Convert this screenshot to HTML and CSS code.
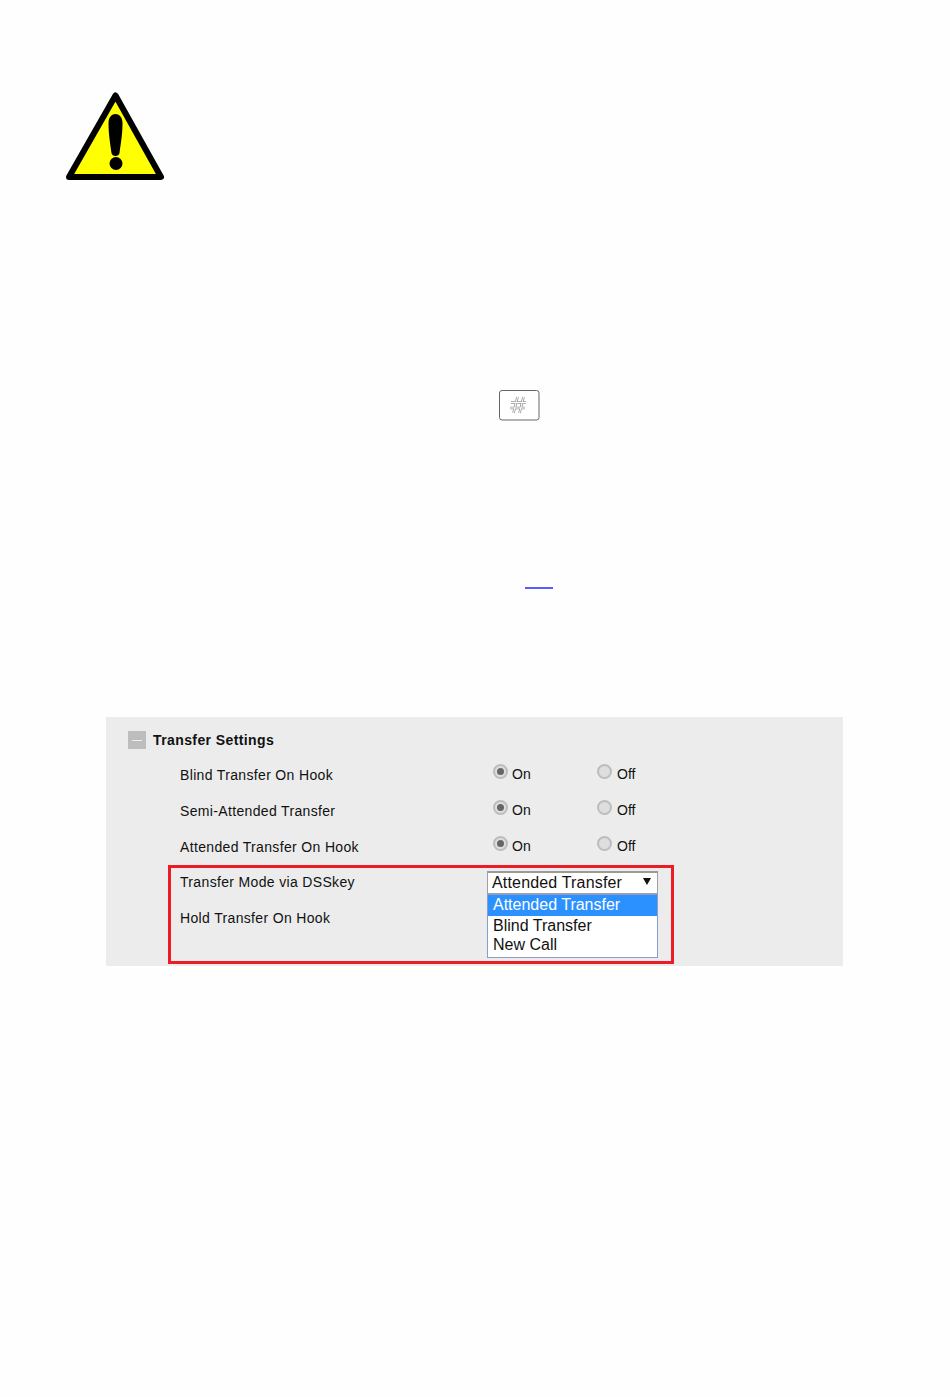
FILE: index.html
```html
<!DOCTYPE html>
<html>
<head>
<meta charset="utf-8">
<title>Transfer Settings</title>
<link rel="stylesheet" href="styles.css">
</head>
<body>

<svg class="warn" width="102" height="90" viewBox="0 0 102 90">
    <path d="M51.500 4.500 L97 86 L5 86 Z" fill="#ffff00" stroke="#000" stroke-width="6" stroke-linejoin="round"/>
    <path d="M44.500 32 C44.500 20 58.500 20 58.500 32 C58.500 44 56.500 54 55.500 62 C55 66 48 66 47.500 62 C46.500 54 44.500 44 44.500 32 Z" fill="#000"/>
    <circle cx="52" cy="72.500" r="6.500" fill="#000"/>
</svg>

<svg class="key" width="41" height="31" viewBox="0 0 41 31">
    <rect x="0.5" y="0.5" width="39.500" height="29.500" rx="2.500" fill="#fff" stroke="#666"/>
    <path d="M18.500 7 L14.500 23 M24.500 7 L20.500 23 M12 12.500 H27 M11 18 H26" fill="none" stroke="#999" stroke-width="2.600"/>
    <path d="M18.500 7 L14.500 23 M24.500 7 L20.500 23 M12 12.500 H27 M11 18 H26" fill="none" stroke="#fff" stroke-width="1"/>
</svg>

<div class="link-line"><a class="blank-link"></a></div>

<div class="panel">
    <div class="panel-title"><span class="collapse"><i></i></span>Transfer Settings</div>
    <div class="row">
        <span class="label">Blind Transfer On Hook</span>
        <span class="opt opt-on"><span class="radio radio-on"></span>On</span>
        <span class="opt"><span class="radio"></span>Off</span>
    </div>
    <div class="row">
        <span class="label">Semi-Attended Transfer</span>
        <span class="opt opt-on"><span class="radio radio-on"></span>On</span>
        <span class="opt"><span class="radio"></span>Off</span>
    </div>
    <div class="row">
        <span class="label">Attended Transfer On Hook</span>
        <span class="opt opt-on"><span class="radio radio-on"></span>On</span>
        <span class="opt"><span class="radio"></span>Off</span>
    </div>
    <div class="row row-mode">
        <span class="label">Transfer Mode via DSSkey</span>
        <div class="select">
            <div class="select-box">Attended Transfer<span class="arrow"></span></div>
            <ul class="select-list">
                <li class="selected">Attended Transfer</li>
                <li>Blind Transfer</li>
                <li>New Call</li>
            </ul>
        </div>
    </div>
    <div class="row">
        <span class="label">Hold Transfer On Hook</span>
    </div>
    <div class="callout"></div>
</div>

</body>
</html>
```

FILE: styles.css
```css
html, body {margin:0; padding:0; background:#fefefe;}
body {font:14px "Liberation Sans", Arial, sans-serif; color:#111; height:1397px; overflow:hidden;}

.warn {display:block; margin:91px 0 0 64px;}
.key {display:block; margin:209px 0 0 499px;}
.link-line {height:2px; margin-top:166px; padding-left:525px;}
.blank-link {display:block; width:28px; height:2px; background:#5a5aff;}

.panel {position:relative; margin:128px 107px 0 106px; height:249px; background:#ececec; box-sizing:border-box; padding-top:14px;}
.panel-title {display:flex; align-items:center; height:18px; margin-left:22px; font-weight:bold; letter-spacing:.4px;}
.collapse {display:flex; align-items:center; justify-content:center; width:18px; height:18px; margin-right:7px; background:#bdbdbd;}
.collapse i {display:block; width:10px; height:1px; background:#eee;}

.row {display:flex; align-items:center; height:36px; margin-left:74px;}
.panel-title + .row {margin-top:8px;}
.row-mode {margin-top:-1px;}
.label {width:313px; letter-spacing:.34px;}
.opt {display:flex; align-items:center; width:104px; margin-bottom:2px;}
.radio {display:block; position:relative; width:15px; height:15px; margin:-5px 5px 0 0; border-radius:50%; box-sizing:border-box; background:#dedede; border:2px solid #bcbcbc;}
.radio-on {margin-right:4px;}
.radio-on::after {content:""; position:absolute; left:2px; top:2px; width:7px; height:7px; border-radius:50%; background:#666;}

.select {position:relative; width:171px; height:23px; margin:1px 0 0 -6px; font-size:16px; letter-spacing:.17px;}
.select-box {height:23px; line-height:19px; box-sizing:border-box; padding-left:4px; background:#fff; border:1px solid #a0a0a0; border-top:2px solid #9a9a9a;}
.arrow {position:absolute; right:7px; top:7px; border-left:4px solid transparent; border-right:4px solid transparent; border-top:7px solid #111;}
.select-list {position:absolute; left:0; right:0; top:23px; margin:0; padding:0 0 3px; list-style:none; background:#fff; border:1px solid #8a9bcf; letter-spacing:0; z-index:1;}
.select-list li {height:19px; line-height:19px; padding-left:5px;}
.select-list .selected {height:21px; line-height:19px; background:#2b91ff; color:#fff;}

.callout {position:absolute; left:62px; top:148px; width:506px; height:99px; box-sizing:border-box; border:3px solid #ed1c24; z-index:2; pointer-events:none;}
```
